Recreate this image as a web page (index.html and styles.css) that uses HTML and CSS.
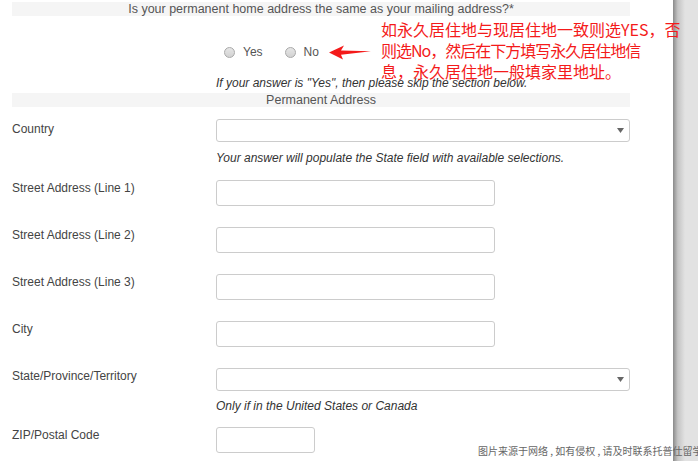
FILE: index.html
```html
<!DOCTYPE html>
<html lang="en">
<head>
    <meta charset="UTF-8">
    <meta name="viewport" content="width=device-width, initial-scale=1.0">
    <title>Permanent Address</title>
    <link rel="stylesheet" href="styles.css">
</head>
<body>
    <div class="viewport">
        <div class="page">
            <div class="bar">Is your permanent home address the same as your mailing address?*</div>
            <div class="radios">
                <label class="radio"><span class="dot"></span>Yes</label>
                <label class="radio"><span class="dot"></span>No</label>
            </div>
            <p class="note">If your answer is "Yes", then please skip the section below.</p>
            <div class="bar bar-second">Permanent Address</div>

            <div class="row row-country">
                <div class="label">Country</div>
                <div class="field">
                    <div class="select">
                        <svg width="7" height="5" viewBox="0 0 7 5"><path d="M0 0H7L3.5 5Z" fill="#666"/></svg>
                    </div>
                    <p class="help">Your answer will populate the State field with available selections.</p>
                </div>
            </div>
            <div class="row">
                <div class="label">Street Address (Line 1)</div>
                <div class="field"><div class="input"></div></div>
            </div>
            <div class="row">
                <div class="label">Street Address (Line 2)</div>
                <div class="field"><div class="input"></div></div>
            </div>
            <div class="row">
                <div class="label">Street Address (Line 3)</div>
                <div class="field"><div class="input"></div></div>
            </div>
            <div class="row">
                <div class="label">City</div>
                <div class="field"><div class="input"></div></div>
            </div>
            <div class="row row-state">
                <div class="label">State/Province/Territory</div>
                <div class="field">
                    <div class="select">
                        <svg width="7" height="5" viewBox="0 0 7 5"><path d="M0 0H7L3.5 5Z" fill="#666"/></svg>
                    </div>
                    <p class="help help-state">Only if in the United States or Canada</p>
                </div>
            </div>
            <div class="row">
                <div class="label">ZIP/Postal Code</div>
                <div class="field"><div class="input input-zip"></div></div>
            </div>
        </div>
        <div class="edge"></div>
    </div>

    <svg class="arrow" width="46" height="16" viewBox="0 0 46 16">
        <path d="M0 7.5 L15 0.5 L12 5.5 L42 6.2 L12 9.8 L14 14.5 Z" fill="#f41a1a"/>
    </svg>
    <div class="callout">如永久居住地与现居住地一致则选YES，否<br><span class="tight">则选No，然后在下方填写永久居住地信</span><br>息，永久居住地一般填家里地址。</div>
    <div class="watermark">图片来源于网络 , 如有侵权 , 请及时联系托普仕留学删除</div>
</body>
</html>
```

FILE: styles.css
```css
html, body {
    margin: 0;
    height: 100%;
    overflow: hidden;
}
body {
    background-color: #e2e2e2;
    font-family: "Liberation Sans", Arial, sans-serif;
    font-size: 12px;
    color: #333;
    position: relative;
}
.viewport {
    display: flex;
    height: 100%;
}
.page {
    width: 673px;
    box-sizing: border-box;
    background: #fff;
    padding: 2px 43px 0 12px;
}
.edge {
    width: 12px;
    background: linear-gradient(to right, #8a8a8a, #c4c4c4 40%, #e2e2e2);
}
.bar {
    height: 14px;
    line-height: 14px;
    font-size: 12.5px;
    color: #555;
    background: #f5f5f5;
    text-align: center;
}
.bar-second {
    margin-top: 3px;
}
.radios {
    display: flex;
    margin: 29px 0 0 212px;
    height: 14px;
    line-height: 14px;
    font-size: 12px;
    color: #555;
}
.radio {
    display: flex;
    align-items: center;
    margin-right: 22px;
}
.dot {
    width: 9px;
    height: 9px;
    border: 1px solid #a9a9a9;
    border-radius: 50%;
    background: linear-gradient(#e6e6e6, #d2d2d2);
    margin-right: 8px;
}
.note {
    margin: 17px 0 0 204px;
    line-height: 14px;
    font-style: italic;
    color: #333;
}
.row {
    display: grid;
    grid-template-columns: 204px 1fr;
    margin-bottom: 21px;
}
.row-country {
    margin-top: 12px;
    margin-bottom: 15px;
}
.row-state {
    margin-bottom: 14px;
}
.label {
    line-height: 14px;
    padding-top: 1px;
    color: #444;
}
.row-country .label {
    padding-top: 3px;
}
.select {
    height: 23px;
    box-sizing: border-box;
    border: 1px solid #ccc;
    border-radius: 3px;
    display: flex;
    justify-content: flex-end;
    align-items: center;
    padding-right: 5px;
}
.input {
    width: 279px;
    height: 26px;
    box-sizing: border-box;
    border: 1px solid #ccc;
    border-radius: 3px;
}
.input-zip {
    width: 99px;
}
.help {
    margin: 9px 0 0;
    line-height: 14px;
    font-style: italic;
    color: #333;
}
.help-state {
    margin-top: 8px;
}
.arrow {
    position: absolute;
    left: 329px;
    top: 45px;
}
.callout {
    position: absolute;
    left: 381px;
    top: 19px;
    font-family: "Noto Sans CJK SC", "Liberation Sans", sans-serif;
    font-size: 16px;
    line-height: 21px;
    color: #f41a1a;
    white-space: nowrap;
}
.callout .tight {
    letter-spacing: -1px;
}
.watermark {
    position: absolute;
    left: 478px;
    top: 443px;
    font-family: "Noto Sans CJK SC", sans-serif;
    font-size: 10px;
    color: #666;
    white-space: nowrap;
}
```
